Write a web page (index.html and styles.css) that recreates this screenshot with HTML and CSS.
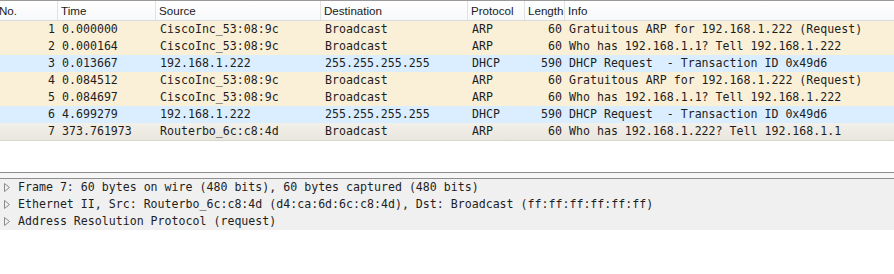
FILE: index.html
```html
<!DOCTYPE html>
<html>
<head>
<meta charset="utf-8">
<link rel="stylesheet" href="styles.css">
</head>
<body>
<div class="list">
  <div class="row head">
    <div class="c no">No.</div>
    <div class="c">Time</div>
    <div class="c">Source</div>
    <div class="c">Destination</div>
    <div class="c">Protocol</div>
    <div class="c">Length</div>
    <div class="c last">Info</div>
  </div>
  <div class="row arp">
    <div class="c num">1</div><div class="c">0.000000</div><div class="c">CiscoInc_53:08:9c</div><div class="c">Broadcast</div><div class="c">ARP</div><div class="c num">60</div><div class="c">Gratuitous ARP for 192.168.1.222 (Request)</div>
  </div>
  <div class="row arp">
    <div class="c num">2</div><div class="c">0.000164</div><div class="c">CiscoInc_53:08:9c</div><div class="c">Broadcast</div><div class="c">ARP</div><div class="c num">60</div><div class="c">Who has 192.168.1.1? Tell 192.168.1.222</div>
  </div>
  <div class="row dhcp">
    <div class="c num">3</div><div class="c">0.013667</div><div class="c">192.168.1.222</div><div class="c">255.255.255.255</div><div class="c">DHCP</div><div class="c num">590</div><div class="c">DHCP Request  - Transaction ID 0x49d6</div>
  </div>
  <div class="row arp">
    <div class="c num">4</div><div class="c">0.084512</div><div class="c">CiscoInc_53:08:9c</div><div class="c">Broadcast</div><div class="c">ARP</div><div class="c num">60</div><div class="c">Gratuitous ARP for 192.168.1.222 (Request)</div>
  </div>
  <div class="row arp">
    <div class="c num">5</div><div class="c">0.084697</div><div class="c">CiscoInc_53:08:9c</div><div class="c">Broadcast</div><div class="c">ARP</div><div class="c num">60</div><div class="c">Who has 192.168.1.1? Tell 192.168.1.222</div>
  </div>
  <div class="row dhcp">
    <div class="c num">6</div><div class="c">4.699279</div><div class="c">192.168.1.222</div><div class="c">255.255.255.255</div><div class="c">DHCP</div><div class="c num">590</div><div class="c">DHCP Request  - Transaction ID 0x49d6</div>
  </div>
  <div class="row sel">
    <div class="c num">7</div><div class="c">373.761973</div><div class="c">Routerbo_6c:c8:4d</div><div class="c">Broadcast</div><div class="c">ARP</div><div class="c num">60</div><div class="c">Who has 192.168.1.222? Tell 192.168.1.1</div>
  </div>
</div>
<div class="split"></div>
<div class="details">
  <div class="drow"><svg class="tri" width="8" height="11" viewBox="0 0 8 11"><path d="M1.5 1.5 L6.5 5.5 L1.5 9.5 Z" fill="none" stroke="#8a8a8a" stroke-width="1"/></svg><span>Frame 7: 60 bytes on wire (480 bits), 60 bytes captured (480 bits)</span></div>
  <div class="drow"><svg class="tri" width="8" height="11" viewBox="0 0 8 11"><path d="M1.5 1.5 L6.5 5.5 L1.5 9.5 Z" fill="none" stroke="#8a8a8a" stroke-width="1"/></svg><span>Ethernet II, Src: Routerbo_6c:c8:4d (d4:ca:6d:6c:c8:4d), Dst: Broadcast (ff:ff:ff:ff:ff:ff)</span></div>
  <div class="drow"><svg class="tri" width="8" height="11" viewBox="0 0 8 11"><path d="M1.5 1.5 L6.5 5.5 L1.5 9.5 Z" fill="none" stroke="#8a8a8a" stroke-width="1"/></svg><span>Address Resolution Protocol (request)</span></div>
</div>
</body>
</html>
```
FILE: styles.css
```css
html, body {
  margin: 0;
  padding: 0;
  background: #ffffff;
}
body {
  width: 894px;
  height: 274px;
  overflow: hidden;
  font-family: "DejaVu Sans Mono", "Liberation Mono", monospace;
  font-size: 11.6px;
  color: #1e1e1e;
}
.list {
  height: 171px;
  border-top: 1px solid #9a9a9a;
}
.row {
  display: grid;
  grid-template-columns: 58px 98px 165px 147px 57px 40px 329px;
  height: 17px;
  line-height: 17px;
  white-space: pre;
}
.row .c {
  overflow: hidden;
  padding-left: 4px;
}
.row .c.num {
  text-align: right;
  padding-left: 0;
  padding-right: 3px;
}
.head {
  height: 19px;
  line-height: 19px;
  font-family: "Liberation Sans", Arial, sans-serif;
  font-size: 11.6px;
  color: #1a1a1a;
  background: linear-gradient(#ffffff, #f7f8fa);
  border-bottom: 1px solid #dcdcdc;
}
.head .c {
  border-right: 1px solid #e2e2e2;
  padding-left: 3px;
}
.head .c.no {
  padding-left: 0;
  margin-left: -1px;
}
.head .c.last {
  border-right: none;
}
.arp {
  background: #faf0d7;
}
.dhcp {
  background: #daeeff;
}
.sel {
  background: linear-gradient(#f2f0ea, #e9e6dd);
  border-bottom: 1px solid #d8d6cf;
}
.split {
  height: 5px;
  border-top: 1px solid #8e8e8e;
  border-bottom: 1px solid #8e8e8e;
  background: #f6f6f6;
}
.details {
  background: #f0f0f0;
  height: 51px;
}
.drow {
  display: flex;
  align-items: center;
  height: 17px;
  line-height: 17px;
  white-space: pre;
}
.tri {
  margin-left: 3px;
  margin-right: 7px;
}
```
